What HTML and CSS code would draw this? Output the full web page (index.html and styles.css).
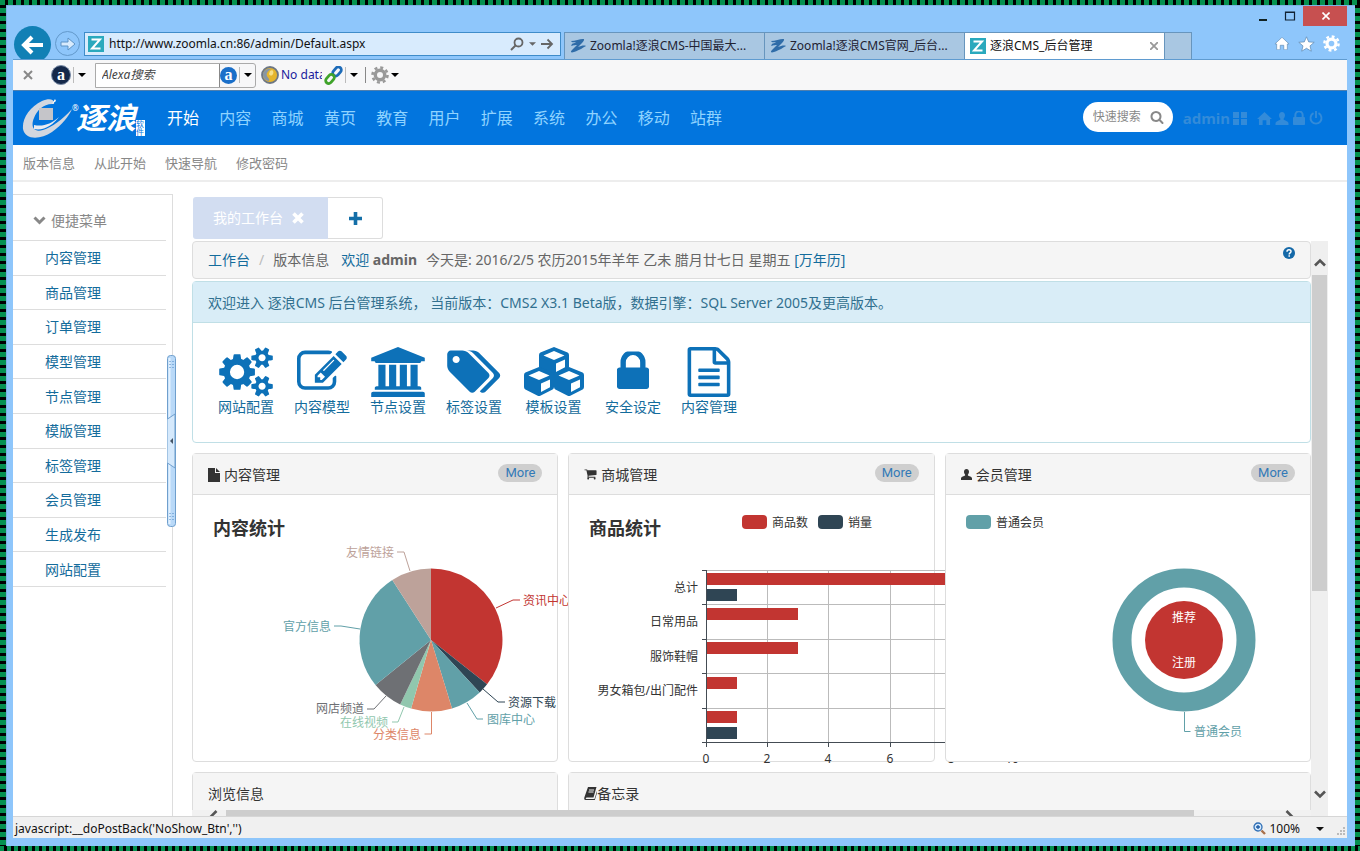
FILE: index.html
```html
<!DOCTYPE html>
<html lang="zh-CN">
<head>
<meta charset="utf-8">
<title>逐浪CMS_后台管理</title>
<link rel="stylesheet" href="styles.css">
</head>
<body>
<svg class="defs" aria-hidden="true">
  <symbol id="search" viewBox="0 0 1792 1792"><path d="M1216 832q0-185-131.5-316.5t-316.5-131.5-316.5 131.5-131.5 316.5 131.5 316.5 316.5 131.5 316.5-131.5 131.5-316.5zm512 832q0 52-38 90t-90 38q-54 0-90-38l-343-342q-179 124-399 124-143 0-273.5-55.5t-225-150-150-225-55.5-273.5 55.5-273.5 150-225 225-150 273.5-55.5 273.5 55.5 225 150 150 225 55.5 273.5q0 220-124 399l343 343q37 37 37 90z"/></symbol>
  <symbol id="lock" viewBox="320 192 1152 1344"><path d="M640 768h512v-192q0-106-75-181t-181-75-181 75-75 181v192zm832 96v576q0 40-28 68t-68 28h-960q-40 0-68-28t-28-68v-576q0-40 28-68t68-28h32v-192q0-184 132-316t316-132 316 132 132 316v192h32q40 0 68 28t28 68z"/></symbol>
  <symbol id="user" viewBox="0 0 14 14"><path d="M7 0c2 0 3.200 1.500 3.200 3.600 0 1.500-.6 2.700-1.400 3.500v1.200c1.500.8 4.500 1.400 5.100 3.200.2.700.1 1.700.1 2.500H0c0-.8-.1-1.800.1-2.500.6-1.800 3.600-2.400 5.100-3.200V7.100C4.400 6.300 3.800 5.100 3.800 3.600 3.800 1.500 5 0 7 0z"/></symbol>
  <symbol id="home" viewBox="0 0 16 14"><path d="M8 0l8 7.500h-2V14h-4V9H6v5H2V7.500H0z"/></symbol>
  <symbol id="caret" viewBox="0 0 8 4"><path d="M0 0h8L4 4z"/></symbol>
  <symbol id="zmark" viewBox="0 0 16 14"><path d="M1 2c4 0 9-2 12-2 2 0 1 2-1 4l-4 4c3-1 6-2 8-1-2 1-6 4-12 6-3 1-4 0-2-2l5-5C4 6 1 7 1 7l1-2c1-.5 3-1 4-2-2 0-4 1-5-1z"/></symbol>
  <symbol id="zsquare" viewBox="0 0 16 16"><rect width="16" height="16" fill="#2aa9bd"/><path d="M3.500 3.500h8.500l-8 9h8.500" fill="none" stroke="#fff" stroke-width="2"/></symbol>
  <symbol id="gear" viewBox="0 0 18 18"><circle cx="9" cy="9" r="7.500" fill="none" stroke="currentColor" stroke-width="2.600" stroke-dasharray="3 2.890"/><circle cx="9" cy="9" r="4.700" fill="none" stroke="currentColor" stroke-width="3.400"/></symbol>
  <symbol id="cube" viewBox="0 0 30 30"><path fill-rule="evenodd" d="M15 0l13.600 5.600Q30 6.300 30 8v12q0 1.600-1.400 2.400L16.300 28.700q-1.300.6-2.600 0L1.400 22.400Q0 21.600 0 20V8q0-1.700 1.400-2.400zM15 4L4.500 8.500 15 13l10.500-4.500zM17 16.500V25l9-4.700v-7.800z"/></symbol>
</svg>

<div class="window">
  <header class="chrome">
    <button class="back" type="button" aria-label="后退"><svg width="24" height="20" viewBox="0 0 24 20"><path d="M22 10H3M11 2l-8 8 8 8" fill="none" stroke="#fff" stroke-width="4"/></svg></button>
    <button class="forward" type="button" aria-label="前进"><svg width="16" height="14" viewBox="0 0 16 14"><path d="M1 5h7V1l7 6-7 6V9H1z" fill="#d8ebfd" stroke="#5c93c6"/></svg></button>
    <form class="address">
      <svg width="16" height="16"><use href="#zsquare"/></svg>
      <input type="text" aria-label="地址" value="http://www.zoomla.cn:86/admin/Default.aspx">
      <svg width="14" height="14" viewBox="0 0 14 14"><circle cx="8.500" cy="5.500" r="4" fill="none" stroke="#666" stroke-width="1.800"/><path d="M5.500 8.500L1 13" stroke="#666" stroke-width="2"/></svg>
      <svg class="dim" width="7" height="4"><use href="#caret"/></svg>
      <svg width="13" height="12" viewBox="0 0 13 12"><path d="M0 6h11M6.500 1.500L11 6l-4.500 4.500" fill="none" stroke="#666" stroke-width="1.800"/></svg>
    </form>
    <nav class="tabs" aria-label="标签页">
      <button class="tab" type="button"><svg class="zblue" width="16" height="14"><use href="#zmark"/></svg><span>Zoomla!逐浪CMS-中国最大...</span></button>
      <button class="tab" type="button"><svg class="zblue" width="16" height="14"><use href="#zmark"/></svg><span>Zoomla!逐浪CMS官网_后台...</span></button>
      <button class="tab current" type="button"><svg width="16" height="16"><use href="#zsquare"/></svg><span>逐浪CMS_后台管理</span><svg class="tab-x" width="8" height="8" viewBox="0 0 8 8"><path d="M0 0l8 8M8 0L0 8" stroke="#999" stroke-width="1.800"/></svg></button>
      <button class="tab new" type="button" aria-label="新建标签页"></button>
    </nav>
    <div class="tools">
      <svg width="16" height="15" viewBox="-1 -1 18 16"><use href="#home" width="16" height="14" fill="#fff" stroke="#5c86ad" stroke-width=".7"/></svg>
      <svg width="17" height="16" viewBox="0 0 17 16"><path d="M8.500.8l2.200 5.100 5.500.4-4.200 3.600 1.300 5.300-4.800-2.900-4.800 2.900L5 9.900.8 6.300l5.500-.4z" fill="#fff" stroke="#5c86ad" stroke-width=".7"/></svg>
      <svg class="white" width="17" height="17"><use href="#gear"/></svg>
    </div>
    <div class="controls">
      <button type="button" aria-label="最小化"><svg width="10" height="10" viewBox="0 0 10 10"><path d="M1 9h8" stroke="#122" stroke-width="2"/></svg></button>
      <button type="button" aria-label="最大化"><svg width="12" height="10" viewBox="0 0 12 10"><path d="M1.500 1h9v8h-9zM1 1.500h10" fill="none" stroke="#123" stroke-width="1.200"/></svg></button>
      <button class="close" type="button" aria-label="关闭"><svg width="8" height="8" viewBox="0 0 8 8"><path d="M.5.5l7 7M7.500.5l-7 7" stroke="#fff" stroke-width="1.600"/></svg></button>
    </div>
  </header>

  <div class="toolbar">
    <svg class="tb-x" width="10" height="10" viewBox="0 0 10 10"><path d="M1 1l8 8M9 1L1 9" stroke="#888" stroke-width="2"/></svg>
    <span class="alexa dark">a</span><i class="rule"></i><svg width="8" height="4"><use href="#caret"/></svg>
    <form class="alexa-box"><input type="text" placeholder="Alexa搜索" aria-label="Alexa搜索"><span class="alexa">a</span><i class="rule"></i><svg width="8" height="4"><use href="#caret"/></svg></form>
    <svg width="18" height="18" viewBox="0 0 18 18"><circle cx="9" cy="9" r="8" fill="#e5b52d" stroke="#6d7785" stroke-width="1.800"/><path d="M2 9c0-5 5-7 8-6-3 2-5 4-4 7 1 2 3 3 2 5-3 0-6-3-6-6z" fill="#8796a6"/><path d="M9 5c3-2 4 1 3 3s-3 2-4 0z" fill="#f7e08a"/></svg>
    <span class="nodata">No data</span>
    <svg width="19" height="19" viewBox="0 0 19 19"><g fill="none" stroke-width="2.800"><rect x="8" y="2.500" width="10" height="6" rx="3" transform="rotate(-50 13 5.500)" stroke="#1d6bb8"/><rect x="1" y="10" width="10" height="6" rx="3" transform="rotate(-50 6 13)" stroke="#3fa32a"/></g></svg>
    <i class="rule"></i><svg width="8" height="4"><use href="#caret"/></svg><i class="rule strong"></i>
    <svg class="grey" width="18" height="18"><use href="#gear"/></svg><svg class="gear-caret" width="8" height="4"><use href="#caret"/></svg>
  </div>

  <div class="site-head">
    <a class="logo" href="#" aria-label="逐浪软件">
      <svg width="50" height="40" viewBox="0 0 50 40"><path d="M32 6C33 1 27 0 20 3 8 9 0 20 1 31c2 11 17 11 29 3 10-7 17-16 20-23-10 11-20 18-29 21-11 3-12-5-9-12C15 12 22 5 32 6z" fill="#d3d7df"/><path d="M33 1l-3 5 4-3z" fill="#fff"/><path d="M17 10h14v12H17z" fill="#c5c5c9"/><path d="M12 27c9 2 17-1 25-8-6 8-15 14-25 12z" fill="#e9ebf0"/></svg>
      <small>®</small><b>逐浪</b><span class="seal">软件</span>
    </a>
    <nav class="main-nav">
      <a class="on" href="#">开始</a><a href="#">内容</a><a href="#">商城</a><a href="#">黄页</a><a href="#">教育</a><a href="#">用户</a><a href="#">扩展</a><a href="#">系统</a><a href="#">办公</a><a href="#">移动</a><a href="#">站群</a>
    </nav>
    <form class="quick"><input type="text" placeholder="快速搜索" aria-label="快速搜索"><button type="button" aria-label="搜索"><svg width="14" height="14"><use href="#search"/></svg></button></form>
    <div class="account">
      <b>admin</b>
      <svg class="grid-icon" width="14" height="13" viewBox="0 0 14 13"><path d="M0 0h6v6H0zM8 0h6v6H8zM0 7h6v6H0zM8 7h6v6H8z"/></svg>
      <svg width="15" height="13"><use href="#home"/></svg>
      <svg width="14" height="13"><use href="#user"/></svg>
      <svg width="14" height="14"><use href="#lock"/></svg>
      <svg width="14" height="14" viewBox="0 0 14 14"><path d="M4.500 2.200a5.500 5.500 0 1 0 5 0M7 0v7" fill="none" stroke="currentColor" stroke-width="1.900"/></svg>
    </div>
  </div>

  <nav class="sub-nav"><a href="#">版本信息</a><a href="#">从此开始</a><a href="#">快速导航</a><a href="#">修改密码</a></nav>

  <div class="body">
    <aside class="side">
      <h2><svg width="13" height="9" viewBox="0 0 13 9"><path d="M1.500 1.500l5 5 5-5" fill="none" stroke="#888" stroke-width="3"/></svg>便捷菜单</h2>
      <ul>
        <li><a href="#">内容管理</a></li><li><a href="#">商品管理</a></li><li><a href="#">订单管理</a></li><li><a href="#">模型管理</a></li><li><a href="#">节点管理</a></li><li><a href="#">模版管理</a></li><li><a href="#">标签管理</a></li><li><a href="#">会员管理</a></li><li><a href="#">生成发布</a></li><li><a href="#">网站配置</a></li>
      </ul>
      <button class="splitter" type="button" aria-label="收起菜单"><svg width="9" height="172" viewBox="0 0 9 172"><rect x=".5" y=".5" width="8" height="171" rx="3" fill="#b9d9f8" stroke="#6f9fcd"/><path d="M2.500 3v166" stroke="#e2f1ff" stroke-width="2"/><path d="M.5 64L8 59v54l-7.500-5" fill="#d5e9fc" stroke="#6f9fcd"/><path d="M6 83v6l-3-3z" fill="#456"/><path d="M3 6v7M6 6v7M3 158v7M6 158v7" stroke="#4a86c4" stroke-dasharray="1 2"/></svg></button>
    </aside>

    <main class="main">
      <div class="work-tabs">
        <button class="work-tab" type="button">我的工作台<svg width="12" height="12" viewBox="0 0 12 12"><path d="M1.500 1.500l9 9M10.500 1.500l-9 9" stroke="#fff" stroke-width="3.600"/></svg></button>
        <button class="add-tab" type="button" aria-label="新增"><svg width="13" height="13" viewBox="0 0 13 13"><path d="M6.500 0v13M0 6.500h13" stroke="#146fa8" stroke-width="3.600"/></svg></button>
      </div>
      <div class="frame">
        <div class="pane">
          <div class="content">
            <div class="crumbs">
              <a href="#">工作台</a><i>/</i><span>版本信息</span><span class="hello"><a href="#">欢迎</a> <b>admin</b></span><span>今天是: 2016/2/5 农历2015年羊年 乙未 腊月廿七日 星期五 <a href="#">[万年历]</a></span>
              <svg class="help" width="12" height="12" viewBox="0 0 12 12"><circle cx="6" cy="6" r="6" fill="#1569a8"/><path d="M4 4.800C4 2.200 8 2.200 8 4.500 8 6 6.200 5.800 6.200 7.400M6.200 8.300v1.500" fill="none" stroke="#fff" stroke-width="1.500"/></svg>
            </div>
            <section class="welcome">
              <p>欢迎进入 逐浪CMS 后台管理系统， 当前版本：CMS2 X3.1 Beta版，数据引擎：SQL Server 2005及更高版本。</p>
              <div class="shortcuts">
                <a href="#"><svg width="54" height="50" viewBox="0 0 1920 1792"><path d="M896 896q0-106-75-181t-181-75-181 75-75 181 75 181 181 75 181-75 75-181zm768 512q0-52-38-90t-90-38-90 38-38 90q0 53 37.500 90.500t90.500 37.500 90.500-37.500 37.500-90.500zm0-1024q0-52-38-90t-90-38-90 38-38 90q0 53 37.500 90.500t90.500 37.500 90.500-37.500 37.500-90.500zm-384 421v185q0 10-7 19.500t-16 10.500l-155 24q-11 35-32 76 34 48 90 115 7 11 7 20 0 12-7 19-23 30-82.500 89.500t-78.500 59.500q-11 0-21-7l-115-90q-37 19-77 31-11 108-23 155-7 24-30 24h-186q-11 0-20-7.500t-10-17.500l-23-153q-34-10-75-31l-118 89q-7 7-20 7-11 0-21-8-144-133-144-160 0-9 7-19 10-14 41-53t47-61q-23-44-35-82l-152-24q-10-1-17-9.500t-7-19.500v-185q0-10 7-19.500t16-10.500l155-24q11-35 32-76-34-48-90-115-7-11-7-20 0-12 7-20 22-30 82-89t79-59q11 0 21 7l115 90q34-18 77-32 11-108 23-154 7-24 30-24h186q11 0 20 7.500t10 17.500l23 153q34 10 75 31l118-89q8-7 20-7 11 0 21 8 144 133 144 160 0 8-7 19-12 16-42 54t-45 60q23 48 34 82l152 23q10 2 17 10.500t7 19.500zm640 533v140q0 16-149 31-12 27-30 52 51 113 51 138 0 4-4 7-122 71-124 71-8 0-46-47t-52-68q-20 2-30 2t-30-2q-14 21-52 68t-46 47q-2 0-124-71-4-3-4-7 0-25 51-138-18-25-30-52-149-15-149-31v-140q0-16 149-31 13-29 30-52-51-113-51-138 0-4 4-7 4-2 35-20t59-34 30-16q8 0 46 46.500t52 67.500q20-2 30-2t30 2q51-71 92-112l6-2q4 0 124 70 4 3 4 7 0 25-51 138 17 23 30 52 149 15 149 31zm0-1024v140q0 16-149 31-12 27-30 52 51 113 51 138 0 4-4 7-122 71-124 71-8 0-46-47t-52-68q-20 2-30 2t-30-2q-14 21-52 68t-46 47q-2 0-124-71-4-3-4-7 0-25 51-138-18-25-30-52-149-15-149-31v-140q0-16 149-31 13-29 30-52-51-113-51-138 0-4 4-7 4-2 35-20t59-34 30-16q8 0 46 46.500t52 67.500q20-2 30-2t30 2q51-71 92-112l6-2q4 0 124 70 4 3 4 7 0 25-51 138 17 23 30 52 149 15 149 31z"/></svg>网站配置</a>
                <a href="#"><svg width="50" height="50" viewBox="0 0 1792 1792"><path d="M888 1184l116-116-152-152-116 116v56h96v96h56zm440-720q-16-16-33 1l-350 350q-17 17-1 33t33-1l350-350q17-17 1-33zm80 594v190q0 119-84.500 203.500t-203.500 84.500h-832q-119 0-203.500-84.500t-84.500-203.500v-832q0-119 84.500-203.500t203.500-84.500h832q63 0 117 25 15 7 18 23 3 17-9 29l-49 49q-14 14-32 8-23-6-45-6h-832q-66 0-113 47t-47 113v832q0 66 47 113t113 47h832q66 0 113-47t47-113v-126q0-13 9-22l64-64q15-15 35-7t20 29zm-96-738l288 288-672 672h-288v-288zm444 132l-92 92-288-288 92-92q28-28 68-28t68 28l152 152q28 28 28 68t-28 68z"/></svg>内容模型</a>
                <a href="#"><svg width="54" height="50" viewBox="0 128 1920 1792"><path d="M960 128l960 384v128h-128q0 26-20.500 45t-48.500 19h-1526q-28 0-48.500-19t-20.500-45h-128v-128zm-704 640h256v768h128v-768h256v768h128v-768h256v768h128v-768h256v768h59q28 0 48.500 19t20.500 45v64h-1664v-64q0-26 20.500-45t48.500-19h59v-768zm1595 960q28 0 48.500 19t20.500 45v128h-1920v-128q0-26 20.500-45t48.500-19h1782z"/></svg>节点设置</a>
                <a href="#"><svg width="54" height="50" viewBox="0 0 1920 1792"><path d="M448 448q0-53-37.500-90.500t-90.500-37.500-90.500 37.500-37.500 90.500 37.500 90.500 90.500 37.500 90.500-37.500 37.500-90.500zm1067 576q0 53-37 90l-491 492q-39 37-91 37-53 0-90-37l-715-716q-38-37-64.500-101t-26.500-117v-416q0-52 38-90t90-38h416q53 0 117 26.500t102 64.500l715 714q37 39 37 91zm384 0q0 53-37 90l-491 492q-39 37-91 37-36 0-59-14t-53-45l470-470q37-37 37-90 0-52-37-91l-715-714q-38-38-102-64.500t-117-26.500h224q53 0 117 26.500t102 64.500l715 714q37 39 37 91z"/></svg>标签设置</a>
                <a class="wide" href="#"><svg width="60" height="50" viewBox="0 0 60 50"><use href="#cube" x="15" y="0" width="30" height="30"/><use href="#cube" x="0" y="20" width="30" height="30"/><use href="#cube" x="30" y="20" width="30" height="30"/></svg>模板设置</a>
                <a href="#"><svg width="50" height="50" viewBox="0 0 1792 1792"><use href="#lock" x="320" y="160" width="1152" height="1344"/></svg>安全设定</a>
                <a href="#"><svg width="50" height="50" viewBox="0 0 1792 1792"><path d="M1596 380q28 28 48 76t20 88v1152q0 40-28 68t-68 28h-1344q-40 0-68-28t-28-68v-1600q0-40 28-68t68-28h896q40 0 88 20t76 48zm-444-244v376h376q-10-29-22-41l-313-313q-12-12-41-22zm384 1528v-1024h-416q-40 0-68-28t-28-68v-416h-768v1536h1280zm-1024-864q0-14 9-23t23-9h704q14 0 23 9t9 23v64q0 14-9 23t-23 9h-704q-14 0-23-9t-9-23v-64zm736 224q14 0 23 9t9 23v64q0 14-9 23t-23 9h-704q-14 0-23-9t-9-23v-64q0-14 9-23t23-9h704zm0 256q14 0 23 9t9 23v64q0 14-9 23t-23 9h-704q-14 0-23-9t-9-23v-64q0-14 9-23t23-9h704z"/></svg>内容管理</a>
              </div>
            </section>

            <div class="cards">
              <section class="card">
                <h3><svg width="12" height="14" viewBox="0 0 12 14"><path d="M0 0h7v5h5v9H0zM8 0l4 4H8z"/></svg>内容管理<a class="more" href="#">More</a></h3>
                <svg class="chart" width="340" height="266" viewBox="0 0 340 266">
                  <text class="title" x="20" y="40">内容统计</text>
                  <path fill="#c23531" d="M238 145V73.500A71.500 71.500 0 0 1 294.100 189.300z"/>
                  <path fill="#2f4554" d="M238 145L294.100 189.300A71.500 71.500 0 0 1 286.700 197.400z"/>
                  <path fill="#61a0a8" d="M238 145L286.700 197.400A71.500 71.500 0 0 1 259 213.400z"/>
                  <path fill="#dd8668" d="M238 145L259 213.400A71.500 71.500 0 0 1 218.100 213.600z"/>
                  <path fill="#91c7ae" d="M238 145L218.100 213.600A71.500 71.500 0 0 1 207.200 209.500z"/>
                  <path fill="#6e7074" d="M238 145L207.200 209.500A71.500 71.500 0 0 1 182.500 190.100z"/>
                  <path fill="#61a0a8" d="M238 145L182.500 190.100A71.500 71.500 0 0 1 199.300 84.900z"/>
                  <path fill="#bda29a" d="M238 145L199.300 84.900A71.500 71.500 0 0 1 238 73.500z"/>
                  <g fill="none">
                    <path stroke="#c23531" d="M303 113l17-8h7"/><path stroke="#2f4554" d="M290 194l15 13h7"/><path stroke="#61a0a8" d="M274 208l10 16h6"/><path stroke="#dd8668" d="M238.500 217v22h-7"/><path stroke="#91c7ae" d="M211 212l-6 15h-6"/><path stroke="#6e7074" d="M193 201l-12 13h-7"/><path stroke="#61a0a8" d="M167 134l-19-3h-7"/><path stroke="#bda29a" d="M217 76l-6-19h-7"/>
                  </g>
                  <text fill="#c23531" x="330" y="110">资讯中心</text><text fill="#2f4554" x="315" y="212">资源下载</text><text fill="#61a0a8" x="294" y="229">图库中心</text>
                  <g class="end"><text fill="#dd8668" x="228" y="244">分类信息</text><text fill="#91c7ae" x="195" y="232">在线视频</text><text fill="#6e7074" x="171" y="218">网店频道</text><text fill="#61a0a8" x="138" y="136">官方信息</text><text fill="#bda29a" x="201" y="62">友情链接</text></g>
                </svg>
              </section>
              <section class="card">
                <h3><svg width="13" height="13" viewBox="0 128 1792 1664"><path d="M704 1536q0 52-38 90t-90 38-90-38-38-90 38-90 90-38 90 38 38 90zm896 0q0 52-38 90t-90 38-90-38-38-90 38-90 90-38 90 38 38 90zm128-1088v512q0 24-16.500 42.500t-40.500 21.500l-1044 122q13 60 13 70 0 16-24 64h920q26 0 45 19t19 45-19 45-45 19h-1024q-26 0-45-19t-19-45q0-11 8-31.500t16-36 21.500-40 15.500-29.500l-177-823h-204q-26 0-45-19t-19-45 19-45 45-19h256q16 0 28.500 6.500t19.500 15.500 13 24.500 8 26 5.500 29.500 4.500 26h1201q26 0 45 19t19 45z"/></svg>商城管理<a class="more" href="#">More</a></h3>
                <svg class="chart" width="340" height="266" viewBox="0 0 340 266">
                  <text class="title" x="20" y="40">商品统计</text>
                  <rect x="173" y="20" width="25" height="14" rx="4" fill="#c23531"/><text x="203" y="32">商品数</text>
                  <rect x="249" y="20" width="25" height="14" rx="4" fill="#2f4554"/><text x="279" y="32">销量</text>
                  <path stroke="#bbb" fill="none" d="M138 75.500h320M138 109.500h320M138 144.500h320M138 178.500h320M138 213.500h320M198.500 75v172M259.500 75v172M321.500 75v172"/>
                  <path fill="#c23531" d="M138 78h300v12H138zM138 113h91v12h-91zM138 147h91v12h-91zM138 182h30v12h-30zM138 216h30v12h-30z"/>
                  <path fill="#2f4554" d="M138 94h30v12h-30zM138 232h30v12h-30z"/>
                  <path stroke="#444c54" fill="none" d="M137.500 75v177M133 75.500h5M133 109.500h5M133 144.500h5M133 178.500h5M133 213.500h5M133 247.500h325M198.500 247v5M259.500 247v5M321.500 247v5"/>
                  <g class="end"><text x="129" y="97">总计</text><text x="129" y="131">日常用品</text><text x="129" y="166">服饰鞋帽</text><text x="129" y="200">男女箱包/出门配件</text></g>
                  <g class="mid"><text x="137" y="268">0</text><text x="198" y="268">2</text><text x="259" y="268">4</text><text x="321" y="268">6</text><text x="382" y="268">8</text><text x="443" y="268">10</text></g>
                </svg>
              </section>
              <section class="card">
                <h3><svg width="11" height="13"><use href="#user"/></svg>会员管理<a class="more" href="#">More</a></h3>
                <svg class="chart" width="340" height="266" viewBox="0 0 340 266">
                  <rect x="20" y="20" width="25" height="14" rx="4" fill="#61a0a8"/><text x="50" y="32">普通会员</text>
                  <circle cx="238" cy="145" r="62" fill="none" stroke="#61a0a8" stroke-width="19"/>
                  <circle cx="238" cy="145" r="39" fill="#c23531"/>
                  <g class="mid light"><text x="238" y="127">推荐</text><text x="238" y="172">注册</text></g>
                  <path fill="none" stroke="#61a0a8" d="M238.500 217v19.500h6"/><text fill="#61a0a8" x="248" y="241">普通会员</text>
                </svg>
              </section>
              <section class="card"><h3>浏览信息</h3></section>
              <section class="card span"><h3 class="tight"><svg width="13" height="13" viewBox="0 0 13 13"><path d="M4 0h8.500L9.500 10.500H2.500L1.500 12h9L13 4v2l-2.200 7H1.500C0 13 0 11.500.5 10z"/><path d="M5 3h5M4.500 5h5" stroke="#f5f5f5"/></svg>备忘录</h3></section>
            </div>
          </div>
          <div class="hbar"><svg width="9" height="12" viewBox="0 0 9 12"><path d="M7.500 1l-5 5 5 5" fill="none" stroke="#555" stroke-width="2.600"/></svg><i></i><svg width="9" height="12" viewBox="0 0 9 12"><path d="M1.500 1l5 5-5 5" fill="none" stroke="#555" stroke-width="2.600"/></svg></div>
        </div>
        <div class="vbar"><button type="button" aria-label="向上"><svg width="12" height="9" viewBox="0 0 12 9"><path d="M1 7.500l5-5 5 5" fill="none" stroke="#555" stroke-width="2.600"/></svg></button><i></i><button class="down" type="button" aria-label="向下"><svg width="12" height="9" viewBox="0 0 12 9"><path d="M1 1.500l5 5 5-5" fill="none" stroke="#555" stroke-width="2.600"/></svg></button></div>
      </div>
    </main>
  </div>

  <footer class="status">
    <span>javascript:__doPostBack('NoShow_Btn','')</span>
    <svg class="zoom-icon" width="13" height="13" viewBox="0 0 13 13"><circle cx="5" cy="5" r="4" fill="#d4e8fb" stroke="#2f6fb5" stroke-width="1.300"/><path d="M5 3v4M3 5h4" stroke="#1a5aa5" stroke-width="1.300"/><path d="M8.500 8.500L12 12" stroke="#a9714b" stroke-width="2.400"/></svg>
    <span>100%</span>
    <svg class="zoom-caret" width="8" height="4"><use href="#caret"/></svg>
    <svg width="9" height="9" viewBox="0 0 9 9"><path d="M6 0h2v2H6zM3 3h2v2H3zM6 3h2v2H6zM0 6h2v2H0zM3 6h2v2H3zM6 6h2v2H6z" fill="#bbb"/></svg>
  </footer>
</div>
</body>
</html>
```
FILE: styles.css
```css
* { box-sizing: border-box; }
body {
  margin: 0;
  height: 100vh;
  padding: 5px 5px 5px 6px;
  background:
    repeating-linear-gradient(90deg, #059150 0 5px, #000 5px 8px) top / 100% 5px no-repeat,
    repeating-linear-gradient(90deg, #059150 0 4px, #000 4px 7px) bottom / 100% 5px no-repeat,
    repeating-linear-gradient(180deg, #059150 0 5px, #000 5px 8px);
  font: 14px/20px "Noto Sans", "Noto Sans CJK SC", sans-serif;
  color: #333;
}
a { color: #146c9c; text-decoration: none; }
button, input { font: inherit; color: inherit; border: 0; padding: 0; margin: 0; background: none; min-width: 0; }
h2, h3, p, ul { margin: 0; padding: 0; font-weight: 400; }
ul { list-style: none; }
svg { flex: none; fill: currentColor; }
.defs { position: absolute; width: 0; height: 0; }

.window { height: 100%; display: flex; flex-direction: column; background: #8ec6fb; border: solid #7eb3e6; border-width: 1px 0 0 1px; padding: 0 8px 8px 6px; }

/* browser chrome */
.chrome { position: relative; height: 54px; flex: none; display: flex; align-items: flex-end; overflow: hidden; font-size: 12px; border-bottom: 1px solid #5f9bd0; }
.back { width: 37px; height: 37px; margin: 0 4px -4px 1px; border-radius: 50%; background: #1180b5; display: grid; place-items: center; flex: none; }
.forward { width: 25px; height: 25px; margin: 0 4px 3px 0; border-radius: 50%; border: 1px solid #6399cb; display: grid; place-items: center; flex: none; }
.address { flex: 0 1 477px; height: 24px; margin: 0 3px 3px 0; padding: 0 6px 0 3px; display: flex; align-items: center; gap: 5px; background: #d8ebfd; border: 1px solid #3f8cc9; color: #111; }
.address input { flex: 1; }
.dim { color: #666; }
.tabs { display: flex; flex: 0 1 628px; min-width: 0; height: 27px; border: solid #6795bd; border-width: 1px 0 0 1px; }
.tab { flex: 0 1 200px; display: flex; align-items: center; gap: 4px; padding-left: 5px; background: #a9c7e2; border-right: 1px solid #6795bd; white-space: nowrap; overflow: hidden; color: #223; }
.tab.current { background: #fff; color: #111; }
.tab.new { flex: 0 1 27px; }
.tab-x { margin: 0 6px 0 auto; }
.zblue { color: #2f6ca8; }
.white { color: #fff; }
.grey { color: #999; }
.tools { margin: 0 7px 7px auto; display: flex; gap: 8px; align-items: center; }
.controls { position: absolute; top: 0; right: -1px; display: flex; height: 20px; }
.controls button { width: 27px; display: grid; place-items: center; }
.controls .close { width: 45px; background: #c75050; }

.toolbar { height: 30px; flex: none; background: #f7f7f8; display: flex; align-items: center; font-size: 12px; color: #000; padding-left: 10px; }
.tb-x { margin-right: 18px; }
.rule { width: 1px; height: 16px; background: #bbb; margin: 0 4px 0 2px; }
.rule.strong { background: #888; margin: 0 5px 0 7px; }
.alexa { flex: none; width: 17px; height: 17px; border-radius: 50%; background: #1a6fc9; color: #fff; font: bold 16px/15px "Liberation Serif", serif; text-align: center; }
.alexa.dark { width: 20px; height: 20px; line-height: 17px; background: #14284a; border: 1px solid #7b8da8; }
.alexa-box { display: flex; align-items: center; height: 25px; width: 161px; margin: 0 5px 0 9px; border: 1px solid #aaa; border-radius: 0 3px 3px 0; }
.alexa-box input { width: 124px; align-self: stretch; background: #fff; border-right: 1px solid #888; padding-left: 6px; font-style: italic; }
.alexa-box input::placeholder { color: #444; }
.nodata { width: 41px; overflow: hidden; white-space: nowrap; color: #1a1a9c; margin: 0 2px; }
.gear-caret { margin-left: 2px; }

/* site header */
.site-head { height: 55px; flex: none; display: flex; align-items: center; background: #0275de; border-top: 1px solid #4f7fae; padding: 0 24px 0 9px; }
.logo { display: flex; align-items: center; color: #fff; margin-right: 22px; }
.logo small { font-size: 8px; line-height: 32px; align-self: flex-start; margin-top: -6px; width: 4px; }
.logo b { font-size: 30px; line-height: 40px; font-style: italic; font-weight: 700; }
.seal { width: 9px; font-size: 8px; line-height: 8px; background: #fff; color: #0275de; align-self: flex-end; margin-bottom: 2px; }
.main-nav { display: flex; justify-content: space-between; flex: 0 1 555px; font-size: 16px; }
.main-nav a { color: #8fd3ff; white-space: nowrap; }
.main-nav .on { color: #fff; }
.quick { margin-left: auto; display: flex; align-items: center; width: 90px; height: 30px; border-radius: 15px; background: #fff; margin-bottom: 2px; padding: 0 9px 0 10px; font-size: 12px; color: #888; }
.quick input { flex: 1; width: 50px; }
.quick input::placeholder { color: #888; }
.quick button { height: 14px; line-height: 14px; }
.account { display: flex; align-items: center; margin-left: 10px; gap: 3px; color: #338bd9; font-size: 15px; }
.grid-icon { margin-right: 7px; }

.sub-nav { height: 37px; flex: none; display: flex; align-items: center; gap: 19px; padding-left: 10px; background: #fff; border-bottom: 2px solid #ededed; font-size: 13px; }
.sub-nav a { color: #888; }

.body { flex: 1; min-height: 0; display: flex; background: #fff; padding-right: 19px; }
.side { position: relative; flex: none; width: 160px; margin-top: 12px; border: solid #ddd; border-width: 1px 1px 0 0; padding-right: 6px; }
.side h2 { height: 46px; display: flex; align-items: center; gap: 5px; padding: 6px 0 0 20px; font-size: 14px; color: #888; border-bottom: 1px solid #ddd; }
.side ul { display: grid; grid-auto-rows: 1fr; height: 346px; }
.side li { display: flex; align-items: center; padding: 1px 0 0 32px; border-bottom: 1px solid #ddd; }
.splitter { position: absolute; right: -4px; top: 160px; width: 9px; height: 172px; line-height: 0; }

.main { flex: 1; min-width: 0; display: flex; flex-direction: column; margin-left: 19px; padding-top: 15px; }
.work-tabs { display: flex; height: 42px; flex: none; margin: 0 0 2px 1px; }
.work-tab { display: flex; align-items: center; gap: 9px; padding: 0 24px 0 20px; background: #d2ddf1; color: #fff; border-radius: 3px 0 0 3px; }
.add-tab { width: 55px; border: 1px solid #ddd; border-left: 0; border-radius: 0 3px 3px 0; display: grid; place-items: center; }
.frame { flex: 1; min-height: 0; display: flex; overflow: hidden; }
.pane { flex: 1; min-width: 0; display: flex; flex-direction: column; }
.content { flex: 1; min-height: 0; overflow: hidden; }

.crumbs { display: flex; height: 38px; align-items: center; padding: 0 15px; background: #f5f5f5; border: 1px solid #ddd; border-radius: 4px; color: #666; margin-bottom: 2px; white-space: nowrap; }
.crumbs > i { color: #bbb; margin: 0 9px; font-style: normal; }
.hello { margin: 0 9px 0 12px; }
.help { margin-left: auto; align-self: flex-start; margin-top: 5px; }
.welcome { border: 1px solid #c0dfe6; border-radius: 4px; }
.welcome p { height: 41px; line-height: 41px; padding-left: 15px; background: #d9edf7; border-bottom: 1px solid #c0dfe6; color: #31708f; white-space: nowrap; overflow: hidden; }
.shortcuts { display: flex; gap: 20px; padding: 24px 25px 25px; }
.shortcuts a { display: flex; flex-direction: column; align-items: center; width: 56px; line-height: 20px; white-space: nowrap; }
.shortcuts a.wide { width: 63px; }
.shortcuts svg { color: #0d71b8; }

.cards { display: grid; grid-template-columns: repeat(3, minmax(0, 1fr)); gap: 10px; margin-top: 10px; }
.card { background: #fff; border: 1px solid #ddd; border-radius: 4px; }
.card.span { grid-column: span 2; }
.card h3 { display: flex; align-items: center; gap: 4px; height: 41px; padding: 1px 15px 0; background: #f5f5f5; border-bottom: 1px solid #ddd; font-size: 14px; }
.card h3.tight { gap: 0; }
.more { margin: 0 0 4px auto; padding: 0 7px; border-radius: 9px; background: #cfcfcf; color: #337ab7; font-size: 13px; line-height: 18px; font-family: Roboto, sans-serif; }
.chart { display: block; overflow: visible; font-size: 12px; fill: #333; }
.title { font-size: 18px; font-weight: 700; }
.end { text-anchor: end; }
.mid { text-anchor: middle; }
.light { fill: #fff; }

.vbar { width: 17px; flex: none; background: #efefef; display: flex; flex-direction: column; align-items: center; }
.vbar button { height: 34px; padding-top: 7px; flex: none; }
.vbar i { width: 15px; flex: 0 0 55%; background: #cdcdcd; }
.vbar .down { margin-top: auto; padding: 0 0 10px; }
.hbar { height: 6px; flex: none; overflow: hidden; display: flex; gap: 8px; padding: 0 17px; background: #f1f1f1; }
.hbar i { height: 6px; background: #cdcdcd; flex: 0 1 968px; }
.hbar svg:last-child { margin-left: auto; }

.status { height: 22px; flex: none; display: flex; align-items: center; background: #f0f0f0; border-top: 1px solid #d6d6d6; font-size: 12px; color: #111; padding: 2px 1px 0 2px; }
.zoom-icon { margin: 0 3px 0 auto; }
.zoom-caret { margin: 0 13px 0 16px; }
.status svg:last-child { align-self: flex-end; margin-bottom: 2px; }
```
